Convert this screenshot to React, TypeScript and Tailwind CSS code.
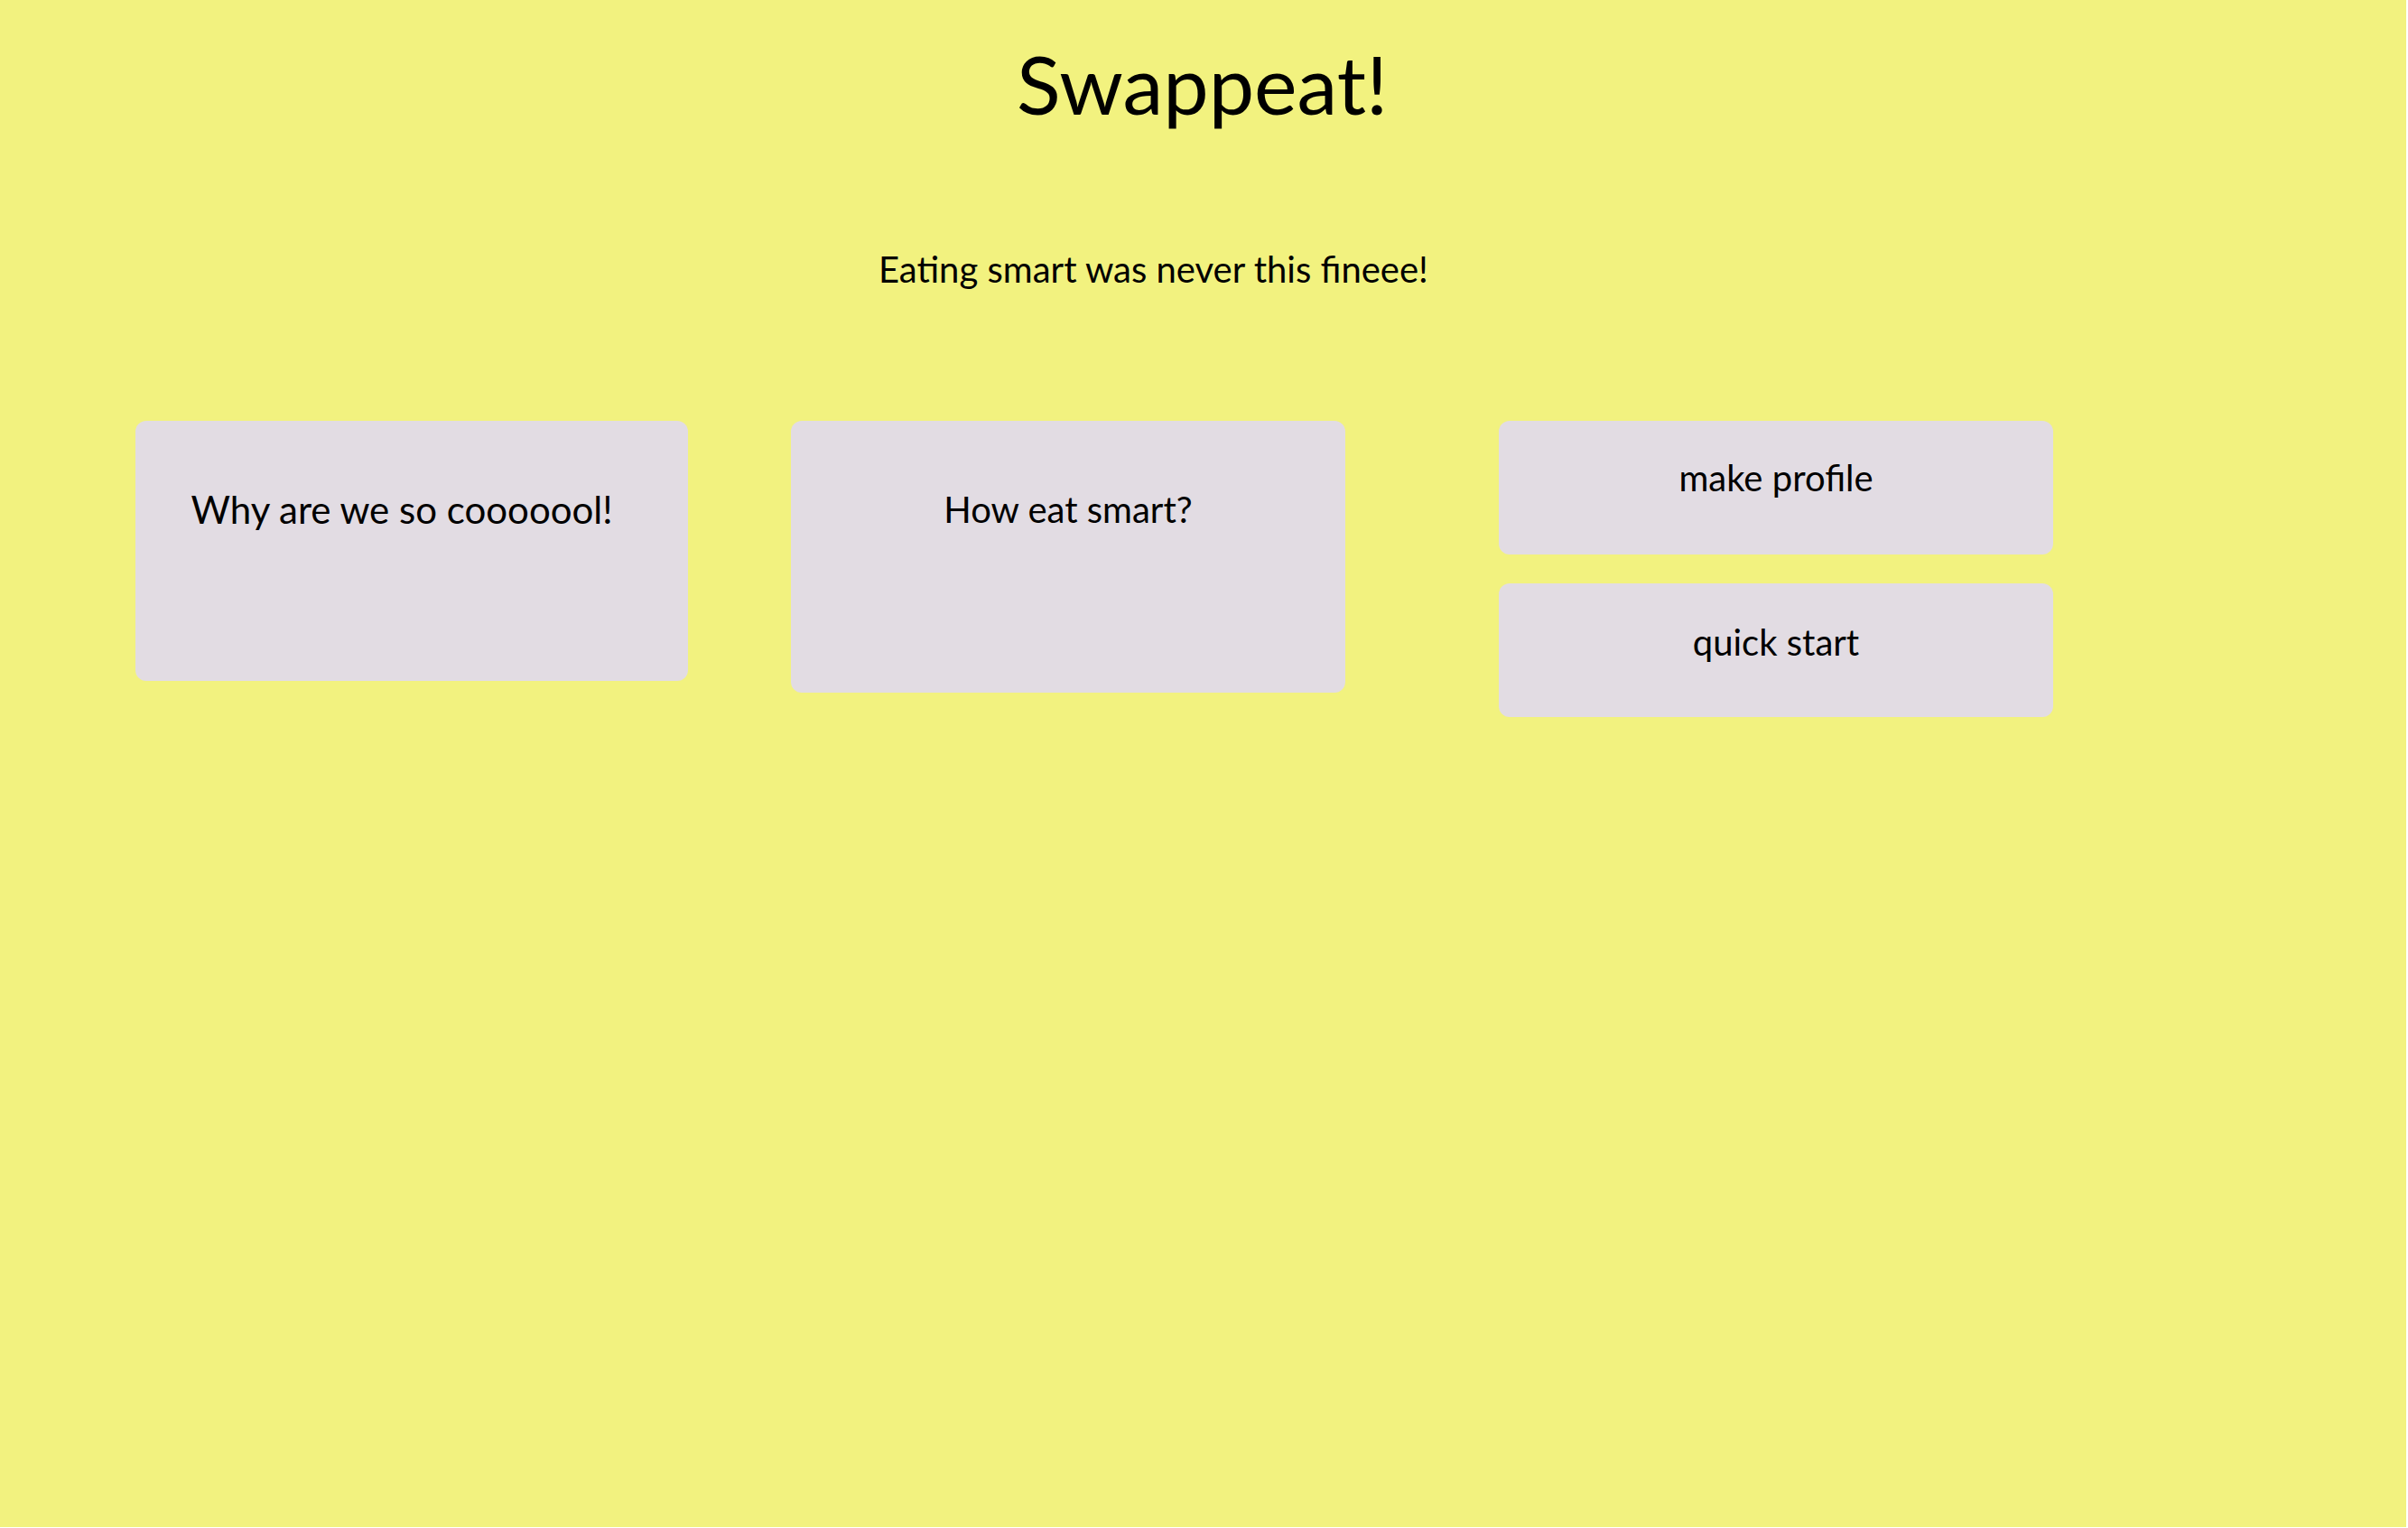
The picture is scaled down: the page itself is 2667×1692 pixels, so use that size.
export default function App() {
  return (
    <div className="min-h-screen bg-white" style={{ fontFamily: "Lato, 'Open Sans', sans-serif" }}>
      <div className="w-[2665px] h-[1691px] bg-[#f2f27f] text-black">
        <header className="flex flex-col">
          <h1 className="pt-[38px] pl-[1126px] text-[90px] leading-[108px]">Swappeat!</h1>
          <p className="mt-[128px] pl-[973px] text-[40px] leading-[48px]">Eating smart was never this fineee!</p>
        </header>

        <main className="mt-[144px] flex items-start pl-[150px]">
          <section className="w-[612px] h-[288px] shrink-0 rounded-[12px] bg-[#e2dce3] pt-[74px] pr-[22px] text-center text-[42px] leading-[48px]">
            Why are we so cooooool!
          </section>
          <section className="ml-[114px] w-[614px] h-[301px] shrink-0 rounded-[12px] bg-[#e2dce3] pt-[74px] text-center text-[40px] leading-[48px]">
            How eat smart?
          </section>
          <div className="ml-[170px] flex shrink-0 flex-col gap-[32px]">
            <button className="flex w-[614px] h-[148px] items-start justify-center rounded-[12px] bg-[#e2dce3] pt-[39px] text-[40px] leading-[48px]">
              make profile
            </button>
            <button className="flex w-[614px] h-[148px] items-start justify-center rounded-[12px] bg-[#e2dce3] pt-[41px] text-[40px] leading-[48px]">
              quick start
            </button>
          </div>
        </main>
      </div>
    </div>
  );
}
